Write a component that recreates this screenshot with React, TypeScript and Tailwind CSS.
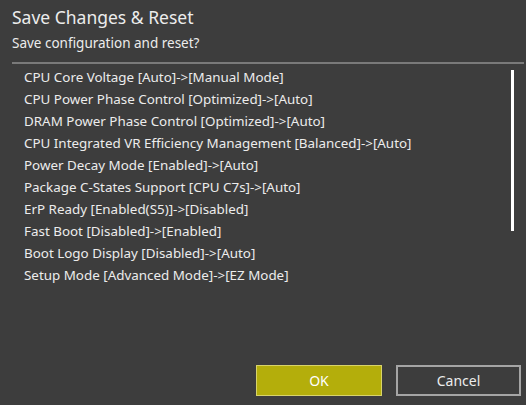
const changes = [
  'CPU Core Voltage [Auto]->[Manual Mode]',
  'CPU Power Phase Control [Optimized]->[Auto]',
  'DRAM Power Phase Control [Optimized]->[Auto]',
  'CPU Integrated VR Efficiency Management [Balanced]->[Auto]',
  'Power Decay Mode [Enabled]->[Auto]',
  'Package C-States Support [CPU C7s]->[Auto]',
  'ErP Ready [Enabled(S5)]->[Disabled]',
  'Fast Boot [Disabled]->[Enabled]',
  'Boot Logo Display [Disabled]->[Auto]',
  'Setup Mode [Advanced Mode]->[EZ Mode]',
];

export default function App() {
  return (
    <div
      className="w-[526px] h-[405px] bg-[#3d3d3d] text-[#ececec] flex flex-col overflow-hidden"
      style={{ fontFamily: '"Noto Sans", "Open Sans", sans-serif' }}
    >
      {/* Header */}
      <div className="pl-3 pr-[2px] pt-[5px]">
        <h1 className="text-[17.5px] leading-[24px]">Save Changes &amp; Reset</h1>
        <p className="text-[13.5px] leading-[20px] mt-[4px]">Save configuration and reset?</p>
        <div className="h-[2px] bg-[#7a7a7a] mt-[9px]" />
      </div>

      {/* Change list */}
      <div className="flex flex-1">
        <ul className="flex-1 pl-6 pt-[2px] text-[13.4px]">
          {changes.map((item) => (
            <li key={item} className="h-[22px] leading-[22px] whitespace-nowrap">
              {item}
            </li>
          ))}
        </ul>
        <div className="w-[3px] h-[161px] bg-white mt-[6px] mr-3" />
      </div>

      {/* Actions */}
      <div className="flex justify-end gap-[14px] pr-[5px] pb-[9px]">
        <button className="w-[126px] h-[31px] bg-[#b4ae0b] border border-[#d8d36a] text-[14px] text-white">
          OK
        </button>
        <button className="w-[125px] h-[31px] border-2 border-[#a5a5a5] text-[14px] text-[#ececec]">
          Cancel
        </button>
      </div>
    </div>
  );
}
